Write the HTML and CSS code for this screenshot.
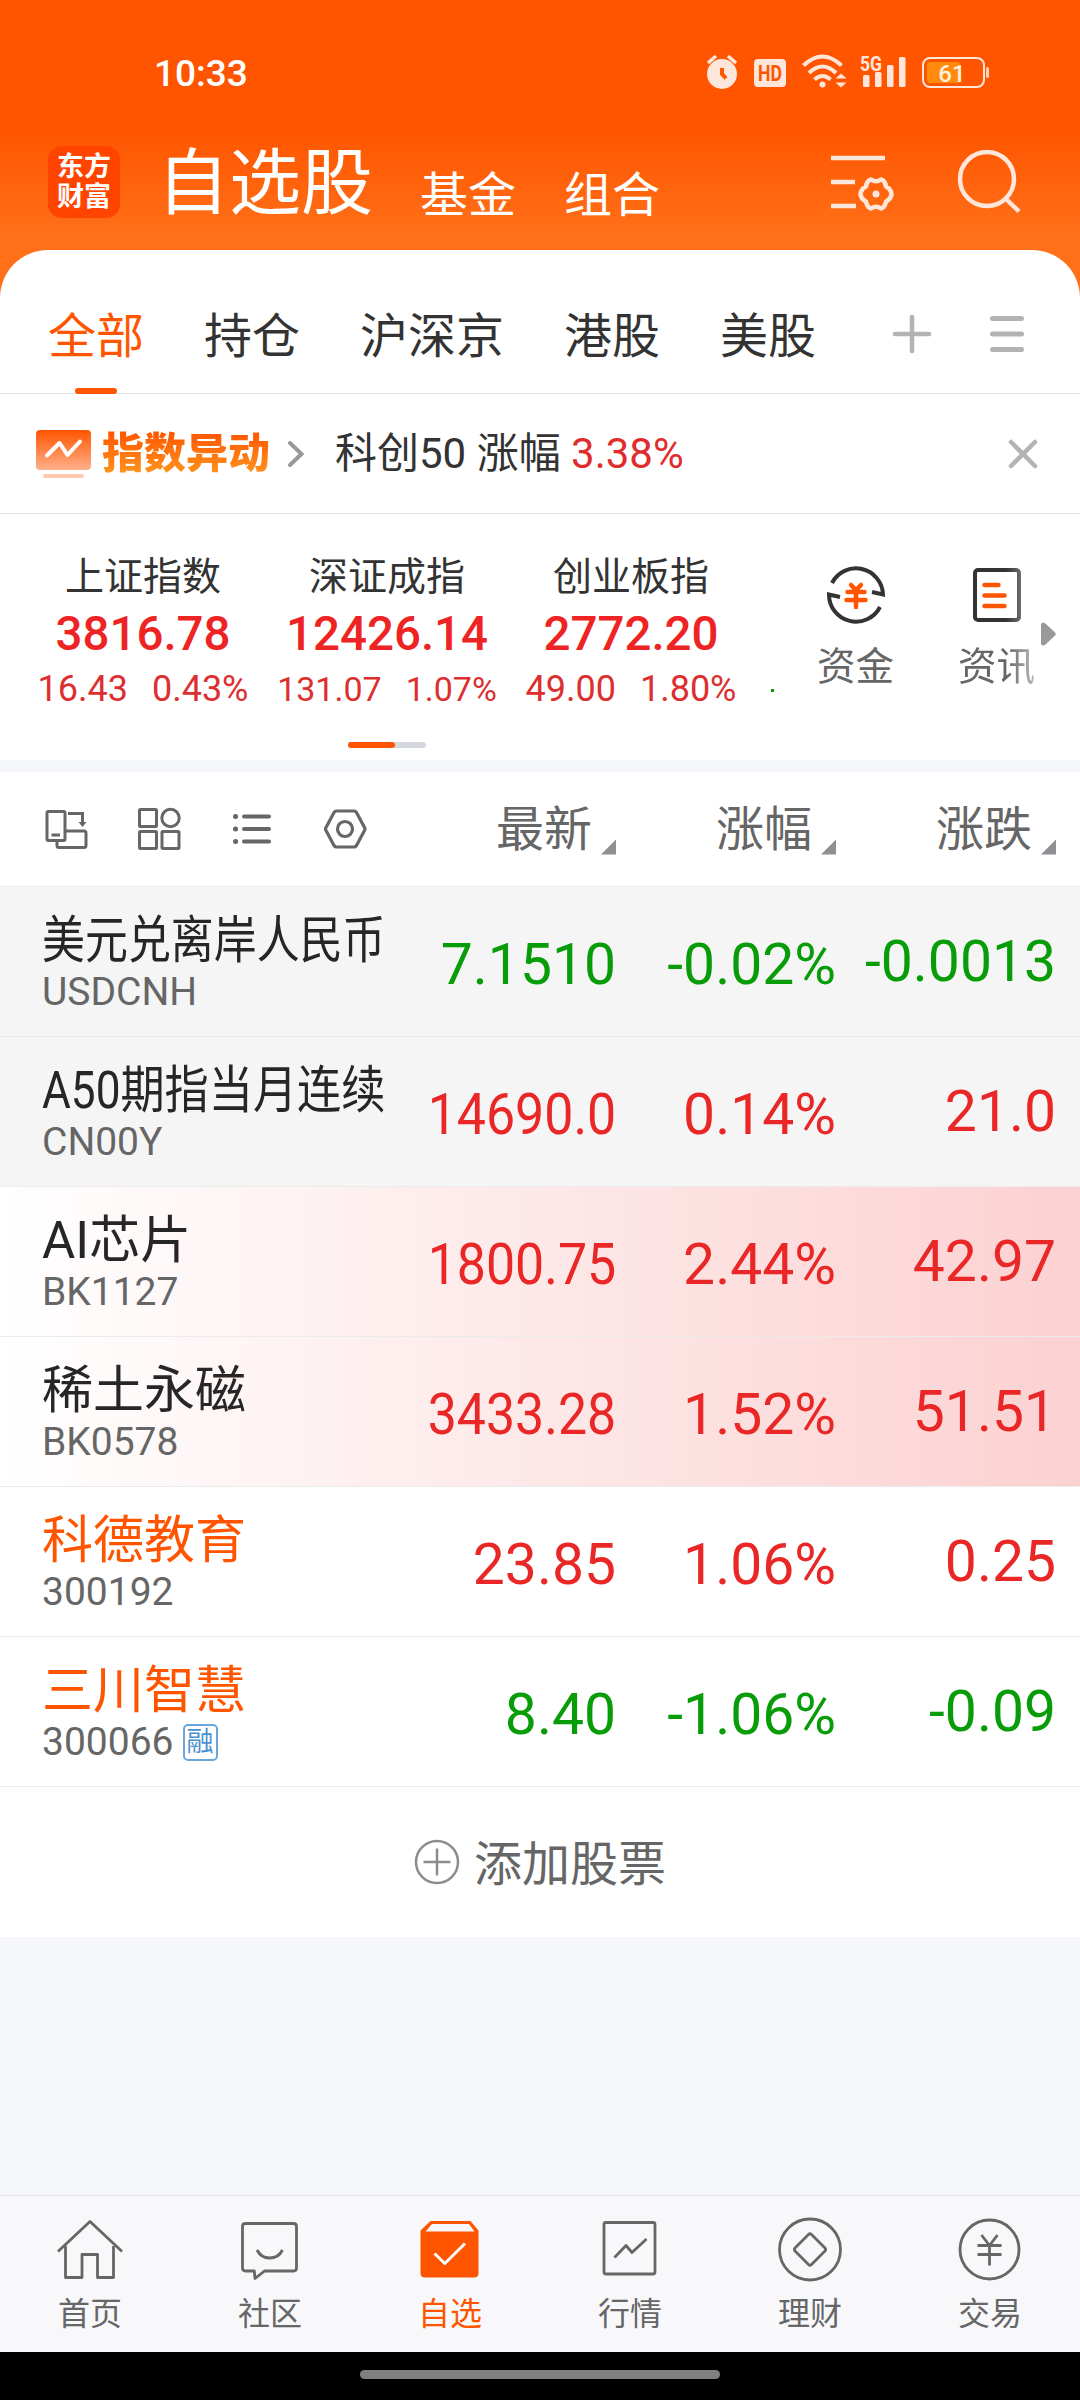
FILE: index.html
```html
<!DOCTYPE html>
<html lang="zh-CN">
<head>
  <meta charset="UTF-8">
  <meta name="viewport" content="width=device-width, initial-scale=1.0">
  <title>自选股</title>
  <link rel="stylesheet" href="styles.css">
</head>
<body>
  <div class="screen">
    <div class="status-bar">
      <span class="time">10:33</span>
      <svg class="status-icons" width="284" height="40" viewBox="0 0 284 40">
        <g fill="#ffe6da">
          <!-- alarm -->
          <circle cx="16" cy="21" r="15"/>
          <path d="M2 10L10 3M22 3L30 10" stroke="#ffe6da" stroke-width="3.500"/>
          <path d="M16 15V21L20 25.500" fill="none" stroke="#ff5500" stroke-width="4"/>
          <!-- HD -->
          <rect x="48" y="6" width="32" height="28" rx="4"/>
          <text class="hd" x="64" y="28" textLength="24" lengthAdjust="spacingAndGlyphs">HD</text>
          <!-- wifi -->
          <g fill="none" stroke="#ffe6da" stroke-width="4">
            <path d="M97.500 12.500Q116.500 -5.500 135.500 12.500"/>
            <path d="M103 20Q116.500 7 130 20"/>
            <path d="M108.500 26.500Q116.500 19.500 124.500 26.500"/>
          </g>
          <circle cx="116.500" cy="31.500" r="3"/>
          <path d="M129.500 25.500L135 20.500L140.500 25.500ZM129.500 29.500L135 34.500L140.500 29.500Z"/>
          <!-- signal -->
          <text class="net" x="154" y="17.500" textLength="22" lengthAdjust="spacingAndGlyphs">5G</text>
          <rect x="157" y="22" width="6.500" height="12" rx="1.500"/>
          <rect x="169" y="19" width="6.500" height="15" rx="1.500"/>
          <rect x="181" y="12" width="6.500" height="22" rx="1.500"/>
          <rect x="193" y="4" width="6.500" height="30" rx="1.500"/>
        </g>
        <!-- battery -->
        <rect x="217" y="5" width="61" height="29" rx="7" fill="none" stroke="#ffe6da" stroke-width="2"/>
        <rect x="221" y="9" width="33" height="21" rx="3" fill="#ff8a0c"/>
        <rect x="280" y="14" width="3" height="11" rx="1.500" fill="#ffd0b4"/>
        <text class="level" x="246" y="28.500">61</text>
      </svg>
    </div>

    <div class="app-head">
      <div class="logo">东方<br>财富</div>
      <h1>自选股</h1>
      <span class="link">基金</span>
      <span class="link">组合</span>
      <svg class="manage" width="66" height="58" viewBox="0 0 66 58" fill="none" stroke="#ffe6da" stroke-width="4.500">
        <path d="M1 5H55M1 29H25M1 53H26"/>
        <path d="M41 26.500Q46 30 51 26.500Q55 27.500 56 33.500Q61 36 61.500 41Q61 46 56 48.500Q55 54.500 51 55.500Q46 52 41 55.500Q37 54.500 36 48.500Q31 46 30.500 41Q31 36 36 33.500Q37 27.500 41 26.500Z" stroke-linejoin="round"/>
        <circle cx="46" cy="41" r="3.500" fill="#ffe6da" stroke="none"/>
      </svg>
      <svg class="search" width="66" height="66" viewBox="0 0 66 66" fill="none" stroke="#ffe6da" stroke-width="4.500">
        <circle cx="30" cy="30" r="27"/>
        <path d="M48.500 49.500L62 62.500"/>
      </svg>
    </div>

    <div class="panel">
      <div class="tabs">
        <span class="tab active">全部</span>
        <span class="tab">持仓</span>
        <span class="tab">沪深京</span>
        <span class="tab">港股</span>
        <span class="tab">美股</span>
        <svg class="plus" width="40" height="40" viewBox="0 0 40 40" stroke="#b3b3b3" stroke-width="4.500" stroke-linecap="round">
          <path d="M3 20H37M20 3V37"/>
        </svg>
        <svg class="menu" width="40" height="40" viewBox="0 0 40 40" stroke="#b3b3b3" stroke-width="5" stroke-linecap="round">
          <path d="M4.500 4.500H33.500M4.500 20H33.500M4.500 35.500H33.500"/>
        </svg>
      </div>

      <div class="notice">
        <svg width="56" height="50" viewBox="0 0 56 50">
          <defs>
            <linearGradient id="noticeFill" x1="0" y1="0" x2="0" y2="1">
              <stop offset="0" stop-color="#ff5500"/>
              <stop offset="1" stop-color="#ffb08c"/>
            </linearGradient>
          </defs>
          <rect x="0" y="1" width="55" height="40" rx="4" fill="url(#noticeFill)"/>
          <rect x="7" y="45" width="41" height="4" rx="2" fill="#ffc8b0"/>
          <path d="M11 26.500L23.500 14L31.500 26L44 12.500" fill="none" stroke="#fff" stroke-width="4" stroke-linecap="round" stroke-linejoin="round"/>
        </svg>
        <strong>指数异动</strong>
        <svg class="chevron" width="18" height="30" viewBox="0 0 18 30" fill="none" stroke="#999" stroke-width="4" stroke-linecap="round">
          <path d="M3 4L14.500 15L3 26"/>
        </svg>
        <span class="notice-text">科创50 涨幅 <em>3.38%</em></span>
        <svg class="close" width="32" height="32" viewBox="0 0 32 32" stroke="#b3b3b3" stroke-width="4.500" stroke-linecap="round">
          <path d="M4 4L28 28M28 4L4 28"/>
        </svg>
      </div>

      <div class="market">
        <div class="index">
          <div class="index-name">上证指数</div>
          <div class="index-value">3816.78</div>
          <div class="index-change"><span>16.43</span><span>0.43%</span></div>
        </div>
        <div class="index">
          <div class="index-name">深证成指</div>
          <div class="index-value">12426.14</div>
          <div class="index-change small"><span>131.07</span><span>1.07%</span></div>
        </div>
        <div class="index">
          <div class="index-name">创业板指</div>
          <div class="index-value">2772.20</div>
          <div class="index-change"><span>49.00</span><span>1.80%</span></div>
        </div>
        <div class="next-index"></div>
        <div class="shortcut">
          <svg width="60" height="60" viewBox="0 0 60 60" fill="none">
            <path d="M6 18A27 27 0 0 1 57 29.500L46 27" stroke="#333" stroke-width="4"/>
            <path d="M54 42A27 27 0 0 1 3 29.500L14 32" stroke="#333" stroke-width="4"/>
            <path d="M25 20L30 25L35 20M30 25V42M21.500 27H38.500M20.500 35H39.500" stroke="#ff5500" stroke-width="4.500" stroke-linecap="round"/>
          </svg>
          <span>资金</span>
        </div>
        <div class="shortcut news">
          <svg width="60" height="60" viewBox="0 0 60 60" fill="none">
            <rect x="8" y="5" width="44" height="50" rx="3" stroke="#333" stroke-width="4"/>
            <path d="M17.500 20H31.500M17.500 30.500H37.500M17.500 41H37.500" stroke="#ff5500" stroke-width="4.500" stroke-linecap="round"/>
          </svg>
          <span>资讯</span>
        </div>
        <div class="pager"><i></i></div>
        <svg class="more" width="15" height="24" viewBox="0 0 15 24"><path d="M0 2Q2 -1 5 2L14 10.500Q15.500 12 14 13.500L5 22Q2 25 0 22Z" fill="#999"/></svg>
      </div>

      <div class="list-head grid">
        <div class="tools">
          <svg width="44" height="44" viewBox="0 0 44 44" fill="none" stroke="#666" stroke-width="3">
            <rect x="3" y="4.500" width="18" height="29" rx="1.500"/>
            <path d="M7.500 28H16" />
            <path d="M21 24H40Q42 24 42 26V38.500Q42 40.500 40 40.500H15Q13 40.500 13 38.500V34"/>
            <path d="M24 6.500H38.500V17"/>
            <path d="M34.500 15H42.500L38.500 20Z" fill="#666" stroke="none"/>
          </svg>
          <svg width="44" height="44" viewBox="0 0 44 44" fill="none" stroke="#666" stroke-width="3">
            <rect x="2.500" y="2.500" width="17" height="17" rx="1"/>
            <circle cx="33.500" cy="11" r="8.700"/>
            <rect x="2.500" y="24.500" width="17" height="17" rx="1"/>
            <rect x="25" y="24.500" width="17" height="17" rx="1"/>
          </svg>
          <svg width="44" height="44" viewBox="0 0 44 44" stroke="#666" stroke-width="4" stroke-linecap="round">
            <path d="M14 9.500H39M14 22H39M14 34.500H39"/>
            <path d="M5.500 9.500H5.600M5.500 22H5.600M5.500 34.500H5.600" stroke-width="5"/>
          </svg>
          <svg width="44" height="44" viewBox="0 0 44 44" fill="none" stroke="#666" stroke-width="3.200" stroke-linejoin="round">
            <path d="M13.500 4H31Q32.500 4 33.500 5.500L41.500 20.500Q42.500 22 41.500 23.500L33.500 38.500Q32.500 40 31 40H13.500Q12 40 11 38.500L3 23.500Q2 22 3 20.500L11 5.500Q12 4 13.500 4Z"/>
            <circle cx="22" cy="22" r="7.500"/>
          </svg>
        </div>
        <div class="sort">最新<i></i></div>
        <div class="sort">涨幅<i></i></div>
        <div class="sort">涨跌<i></i></div>
      </div>

      <div class="row grid pinned down">
        <div class="stock">
          <div class="name narrow">美元兑离岸人民币</div>
          <div class="code">USDCNH</div>
        </div>
        <div class="num">7.1510</div>
        <div class="num">-0.02%</div>
        <div class="num">-0.0013</div>
      </div>
      <div class="row grid pinned up">
        <div class="stock">
          <div class="name narrow-mixed">A50期指当月连续</div>
          <div class="code">CN00Y</div>
        </div>
        <div class="num fit">14690.0</div>
        <div class="num">0.14%</div>
        <div class="num">21.0</div>
      </div>
      <div class="row grid flash up">
        <div class="stock">
          <div class="name">AI芯片</div>
          <div class="code">BK1127</div>
        </div>
        <div class="num fit">1800.75</div>
        <div class="num">2.44%</div>
        <div class="num">42.97</div>
      </div>
      <div class="row grid flash up">
        <div class="stock">
          <div class="name">稀土永磁</div>
          <div class="code">BK0578</div>
        </div>
        <div class="num fit">3433.28</div>
        <div class="num">1.52%</div>
        <div class="num">51.51</div>
      </div>
      <div class="row grid up">
        <div class="stock">
          <div class="name held">科德教育</div>
          <div class="code">300192</div>
        </div>
        <div class="num">23.85</div>
        <div class="num">1.06%</div>
        <div class="num">0.25</div>
      </div>
      <div class="row grid down">
        <div class="stock">
          <div class="name held">三川智慧</div>
          <div class="code">300066<span class="margin-tag">融</span></div>
        </div>
        <div class="num">8.40</div>
        <div class="num">-1.06%</div>
        <div class="num">-0.09</div>
      </div>

      <div class="add">
        <svg width="46" height="46" viewBox="0 0 46 46" fill="none" stroke="#8c8c90" stroke-width="2.500">
          <circle cx="23" cy="23" r="21"/>
          <path d="M9.500 23H36.500M23 9.500V36.500"/>
        </svg>
        <span>添加股票</span>
      </div>
    </div>

    <div class="nav">
      <div class="nav-item">
        <svg width="72" height="72" viewBox="0 0 72 72">
          <path d="M4 38.500L36 8.500L68 38.500M11.500 33V64.500H28V41.500H43.500V64.500H59.500V33"/>
        </svg>
        <span>首页</span>
      </div>
      <div class="nav-item">
        <svg width="72" height="72" viewBox="0 0 72 72">
          <path d="M11.500 10.500H59.500Q62.500 10.500 62.500 13.500V55Q62.500 58 59.500 58H30.500L21 65.500L20.300 58H11.500Q8.500 58 8.500 55V13.500Q8.500 10.500 11.500 10.500Z"/>
          <path d="M23 37Q27 45 35.500 45Q44.500 45 48.500 37"/>
        </svg>
        <span>社区</span>
      </div>
      <div class="nav-item active">
        <svg width="72" height="72" viewBox="0 0 72 72">
          <path class="solid" d="M16.500 8H56.500L64.500 17.500V60Q64.500 64.500 60 64.500H11Q6.500 64.500 6.500 60V17.500Z"/>
          <path class="lid" d="M18 11H55L60.500 18.500H11.500Z"/>
          <path class="tick" d="M20.500 40.500L30.800 50.500L51 30.500"/>
        </svg>
        <span>自选</span>
      </div>
      <div class="nav-item">
        <svg width="72" height="72" viewBox="0 0 72 72">
          <rect x="10" y="9.500" width="51" height="51.500" rx="2"/>
          <path d="M20.500 44.500L32 32.500L38 39.500L52.500 26"/>
        </svg>
        <span>行情</span>
      </div>
      <div class="nav-item">
        <svg width="72" height="72" viewBox="0 0 72 72">
          <circle cx="36" cy="36.500" r="30.500"/>
          <path d="M34.500 21.500Q36 20 37.500 21.500L51 35Q52.300 36.500 51 38L37.500 51.500Q36 53 34.500 51.500L21 38Q19.700 36.500 21 35Z"/>
        </svg>
        <span>理财</span>
      </div>
      <div class="nav-item">
        <svg width="72" height="72" viewBox="0 0 72 72">
          <circle cx="35.500" cy="36.500" r="29.500"/>
          <path d="M27.500 22L35.500 32.500L43.500 22M35.500 32.500V52.500M23.500 32.500H47.500M23.500 41.500H47.500"/>
        </svg>
        <span>交易</span>
      </div>
    </div>
    <div class="home-bar"><i></i></div>
  </div>
</body>
</html>
```
FILE: styles.css
```css
* {
  box-sizing: border-box;
}
body {
  margin: 0;
  font-family: Roboto, "Noto Sans CJK SC", sans-serif;
  color: #333;
  background: #f6f7fa;
}
svg {
  display: block;
  flex: none;
}
.screen {
  width: 1080px;
  height: 2400px;
  display: flex;
  flex-direction: column;
  overflow: hidden;
  background: linear-gradient(#ff5500 130px, #ff7018 235px, #ff7018 320px, #f6f7fa 320px);
}

/* status bar */
.status-bar {
  height: 146px;
  padding: 0 90px 0 154px;
  display: flex;
  align-items: center;
  justify-content: space-between;
}
.time {
  font-size: 37px;
  font-weight: 500;
  color: #fff;
}
.status-icons text {
  font-family: Roboto, sans-serif;
  text-anchor: middle;
}
.status-icons .hd {
  font-size: 22px;
  font-weight: 700;
  fill: #ff5500;
}
.status-icons .net {
  font-size: 21px;
  font-weight: 700;
  text-anchor: start;
}
.status-icons .level {
  font-size: 24px;
  font-weight: 500;
  fill: #fff0e0;
}

/* app header */
.app-head {
  height: 104px;
  padding-left: 48px;
  display: flex;
  align-items: flex-start;
  color: #fff;
}
.logo {
  width: 72px;
  height: 72px;
  padding: 6px 0 0 9px;
  border-radius: 14px;
  background: #ff4400;
  font-size: 27px;
  line-height: 30px;
  font-weight: 700;
}
h1 {
  margin: 2px 47px 0 37px;
  font-size: 72px;
  line-height: 72px;
  font-weight: 400;
}
.link {
  margin: 26px 48px 0 0;
  font-size: 48px;
  line-height: 48px;
}
.manage {
  margin: 7px 0 0 122px;
}
.search {
  margin: 3px 0 0 61px;
}

.panel {
  background: #fff;
  border-radius: 48px 48px 0 0;
}

/* group tabs */
.tabs {
  height: 144px;
  padding: 30px 0 0 48px;
  display: flex;
  align-items: center;
  gap: 60px;
  border-bottom: 1px solid #e3e3e6;
}
.tab {
  position: relative;
  font-size: 48px;
  line-height: 48px;
}
.tab.active {
  color: #ff5500;
}
.tab.active::after {
  content: "";
  position: absolute;
  left: 27px;
  bottom: -33px;
  width: 42px;
  height: 6px;
  border-radius: 3px;
  background: #ff5500;
}
.plus {
  margin: -6px 0 0 16px;
}
.menu {
  margin: -6px 0 0 -4px;
}

/* index notice */
.notice {
  height: 120px;
  padding: 0 41px 0 36px;
  display: flex;
  align-items: center;
  border-bottom: 1px solid #e3e3e6;
}
.notice strong {
  margin-left: 10px;
  font-size: 42px;
  line-height: 46px;
  font-weight: 900;
  color: transparent;
  background: linear-gradient(#ff5500, #ff981f);
  background-clip: text;
  -webkit-background-clip: text;
}
.chevron {
  margin-left: 17px;
}
.notice-text {
  margin-left: 30px;
  font-size: 42px;
  line-height: 46px;
}
.notice-text em {
  font-style: normal;
  color: #e02c2c;
}
.close {
  margin-left: auto;
}

/* market overview */
.market {
  position: relative;
  height: 246px;
  padding-left: 21px;
  display: flex;
}
.index {
  width: 244px;
  padding-top: 41px;
  text-align: center;
}
.index-name {
  font-size: 39px;
  line-height: 44px;
}
.index-value {
  margin: 10px -10px 11px;
  font-size: 47.500px;
  line-height: 50px;
  font-weight: 500;
  color: #ee2424;
}
.index-change {
  display: flex;
  justify-content: center;
  align-items: baseline;
  gap: 24px;
  font-size: 36px;
  line-height: 38px;
  color: #dc2f2f;
}
.index-change.small {
  font-size: 34px;
}
.next-index {
  width: 3px;
  height: 3px;
  margin: 175px 11px 0 18px;
  background: #0a9a0a;
}
.shortcut {
  width: 141px;
  padding-top: 51px;
  display: flex;
  flex-direction: column;
  align-items: center;
  font-size: 38.500px;
  line-height: 44px;
  color: #666;
}
.shortcut svg {
  margin-bottom: 20px;
}
.shortcut.news {
  -webkit-mask-image: linear-gradient(90deg, #000 80px, rgba(0, 0, 0, .4) 112px);
  mask-image: linear-gradient(90deg, #000 80px, rgba(0, 0, 0, .4) 112px);
}
.pager {
  position: absolute;
  left: 348px;
  bottom: 12px;
  width: 78px;
  height: 6px;
  border-radius: 3px;
  background: #d4d7dd;
}
.pager i {
  display: block;
  width: 47px;
  height: 6px;
  border-radius: 3px;
  background: #ff5500;
}
.more {
  position: absolute;
  right: 24px;
  top: 108px;
}

/* stock list */
.grid {
  display: grid;
  grid-template-columns: 380px 194px 220px 220px;
  padding-left: 42px;
}
.list-head {
  height: 127px;
  border-top: 12px solid #f6f7fa;
  border-bottom: 1px solid #ebebeb;
  align-items: center;
}
.tools {
  display: flex;
  gap: 49px;
  padding-left: 2px;
}
.sort {
  padding-top: 1px;
  display: flex;
  justify-content: flex-end;
  align-items: flex-end;
  gap: 9px;
  font-size: 48px;
  line-height: 50px;
  color: #666;
}
.sort i {
  width: 15px;
  height: 15px;
  background: #8e8e93;
  clip-path: polygon(100% 0, 100% 100%, 0 100%);
}
.row {
  height: 150px;
  border-bottom: 1px solid #ebebeb;
}
.pinned {
  background: #f5f5f5;
}
.flash {
  background: linear-gradient(90deg, #fff, #fcd1d1);
}
.stock {
  padding-top: 28px;
  white-space: nowrap;
}
.name {
  font-size: 51px;
  line-height: 52px;
  color: #262626;
  transform-origin: left;
}
.name.held {
  color: #ff5500;
}
.name.narrow {
  transform: scaleX(.842);
}
.name.narrow-mixed {
  transform: scaleX(.866);
}
.code {
  margin-top: 5px;
  display: flex;
  align-items: center;
  font-size: 39px;
  line-height: 40px;
  color: #666;
}
.margin-tag {
  width: 35px;
  height: 37px;
  margin: 0 0 0 9px;
  border: 2px solid #6ba5da;
  border-radius: 5px;
  font-size: 27px;
  line-height: 33px;
  text-align: center;
  color: #4a90d0;
}
.num {
  padding-top: 6px;
  align-self: center;
  justify-self: end;
  font-size: 57px;
  line-height: 60px;
  white-space: nowrap;
}
.num:last-child {
  padding-top: 0;
}
.num.fit {
  transform: scaleX(.91);
  transform-origin: right;
}
.up .num {
  color: #ea2727;
}
.down .num {
  color: #089c08;
}
.add {
  height: 150px;
  display: flex;
  justify-content: center;
  align-items: center;
  gap: 14px;
  font-size: 48px;
  line-height: 48px;
  color: #666;
}
.add span {
  padding-top: 6px;
}

/* bottom navigation */
.nav {
  height: 157px;
  margin-top: auto;
  display: grid;
  grid-template-columns: repeat(6, 1fr);
  background: #f8f8fb;
  border-top: 1px solid #dfe2e4;
}
.nav-item {
  padding-top: 17px;
  display: flex;
  flex-direction: column;
  align-items: center;
  gap: 10px;
  font-size: 32px;
  line-height: 38px;
  color: #666;
}
.nav-item svg {
  fill: none;
  stroke: #666;
  stroke-width: 2.800;
  stroke-linejoin: round;
}
.nav-item.active {
  color: #ff5500;
}
.nav-item .solid {
  fill: #ff5500;
  stroke: none;
}
.nav-item .lid {
  fill: #f8f8fb;
  stroke: none;
}
.nav-item .tick {
  stroke: #fff;
  stroke-width: 3;
}
.home-bar {
  height: 48px;
  padding-top: 18px;
  background: #000;
}
.home-bar i {
  display: block;
  width: 360px;
  height: 9px;
  margin: 0 auto;
  border-radius: 5px;
  background: #808080;
}
```
